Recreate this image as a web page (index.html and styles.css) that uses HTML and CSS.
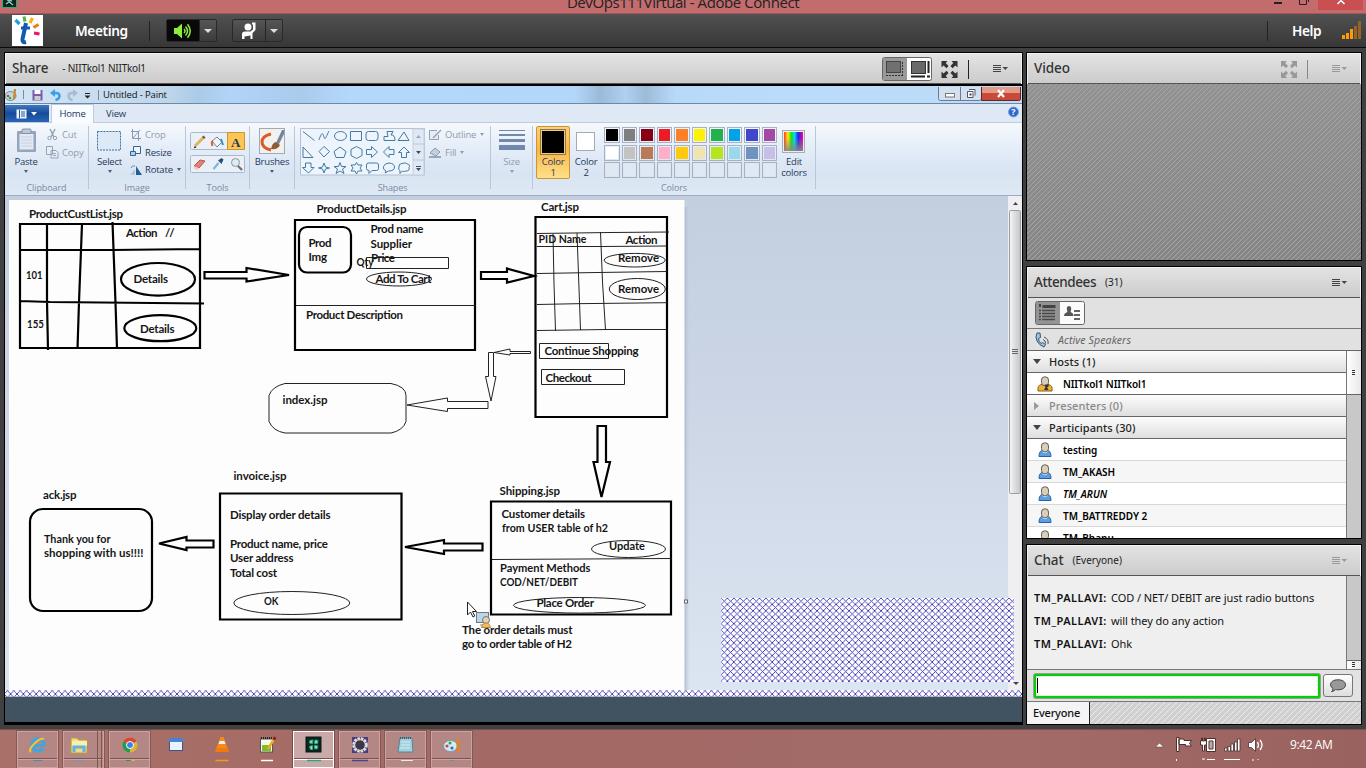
FILE: index.html
```html
<!DOCTYPE html>
<html lang="en">
<head>
<meta charset="utf-8">
<title>DevOps111Virtual - Adobe Connect</title>
<link rel="stylesheet" href="styles.css">
</head>
<body>
<svg class="defs" width="0" height="0">
  <defs>
    <symbol id="menu" viewBox="0 0 15 8"><path d="M0 .5h8M0 2.500h8M0 4.500h8M0 6.500h8" stroke="currentColor"/><path d="M9.500 2h5.500l-2.700 3z" fill="currentColor"/></symbol>
    <symbol id="expand" viewBox="0 0 16 17"><g fill="currentColor"><path d="M0 0h6L4.200 2 7 5 5 7.200 2 4.500 0 6.500z"/><path d="M16 0h-6l1.800 2L9 5l2 2.200 3-2.700 2 2z"/><path d="M0 17h6l-1.800-2L7 12l-2-2.200-3 2.700-2-2z"/><path d="M16 17h-6l1.800-2L9 12l2-2.200 3 2.700 2-2z"/></g></symbol>
    <symbol id="person" viewBox="0 0 14 16"><path d="M1 14.500c0-4 1.500-6 3.500-6h5c2 0 3.500 2 3.500 6z" fill="#5b9fe3" stroke="#2a5fa5"/><path d="M4 9c1.500 3 4.500 3 6 0" fill="#cfe4f8"/><rect x="3.500" y=".8" width="7" height="9" rx="3.300" fill="#d9cfb8" stroke="#625d55"/></symbol>
    <symbol id="host" viewBox="0 0 16 16"><path d="M1 15v-3c0-2 2-3.500 4-3.500h6c2 0 4 1.500 4 3.500v3z" fill="#f0b03a" stroke="#8a5b10"/><rect x="4.500" y=".8" width="7" height="9" rx="3.300" fill="#d9cfb8" stroke="#625d55"/><path d="M7.500 8.500h4v2.500H10l1.500 3H7l1.500-3z" fill="#333"/></symbol>
    <pattern id="hatch" width="6.400" height="6.400" patternUnits="userSpaceOnUse" x="721" y="598"><rect width="6.400" height="6.400" fill="#fff"/><path d="M-1-1l8.400 8.400M-1 7.400l8.400-8.400" stroke="#2f28ae" stroke-width=".85"/></pattern>
    <linearGradient id="desk" x1="0" y1="0" x2="0" y2="1"><stop offset="0" stop-color="#c3cfdf"/><stop offset=".35" stop-color="#cad4e4"/><stop offset="1" stop-color="#dce6f2"/></linearGradient>
    <linearGradient id="shade"><stop offset="0" stop-color="#a9b7ca"/><stop offset="1" stop-color="#c7d2e2" stop-opacity="0"/></linearGradient>
    <linearGradient id="thumb"><stop offset="0" stop-color="#f6f6f6"/><stop offset="1" stop-color="#c2c4c8"/></linearGradient>
    <linearGradient id="rain"><stop offset="0" stop-color="#f33"/><stop offset=".2" stop-color="#fe0"/><stop offset=".4" stop-color="#1d2"/><stop offset=".55" stop-color="#0de"/><stop offset=".75" stop-color="#22e"/><stop offset="1" stop-color="#f09"/></linearGradient>
    <linearGradient id="fade" x1="0" y1="0" x2="0" y2="1"><stop offset=".3" stop-color="#888" stop-opacity="0"/><stop offset="1" stop-color="#888" stop-opacity=".9"/></linearGradient>
  </defs>
</svg>

<header class="titlebar">
  <svg class="app-icon" width="15" height="8"><path d="M.5 0v7.500h14V0" fill="#10251f" stroke="#27ad83"/><path d="M4 4l3-2 4 3M5 0l5 1" stroke="#7fd0b4" stroke-width="1.500"/></svg>
  <div class="window-title">DevOps111Virtual - Adobe Connect</div>
  <div class="win-controls"><svg width="112" height="13"><path d="M20 3h8" stroke="#222" stroke-width="2"/><path d="M45.500 0v4.500h7V0M54.500 0v2" fill="none" stroke="#222"/><rect x="64" width="45" height="10" fill="#c94f50"/><path d="M83.500 4L87 .5 90.500 4" fill="none" stroke="#fff" stroke-width="1.500"/></svg></div>
</header>

<nav class="menubar">
  <svg class="logo" width="31" height="31" viewBox="0 0 31 31"><rect width="31" height="31" fill="#fff"/><path d="M14 8l-3.500 16q-.6 4 3.500 3" fill="none" stroke="#0d5cad" stroke-width="4"/><path d="M9 13h9" stroke="#0d5cad" stroke-width="3"/><g stroke-width="3.200"><path d="M3.500 5l4 4" stroke="#1ba1dc"/><path d="M12 1.500l1 5" stroke="#5cb442"/><path d="M20.500 3l-2.500 5" stroke="#f3b60b"/><path d="M26.500 9.500l-5 3" stroke="#ef7a1a"/><path d="M22 18l5.500 1" stroke="#e3176d"/></g></svg>
  <span class="menu-label">Meeting</span>
  <i class="menu-sep"></i>
  <div class="tool-btn"><span class="tool-main dark"><svg width="20" height="16" viewBox="0 0 20 16"><path d="M1 5h3l5-4.500v15L4 11H1z" fill="#8eee3a"/><path d="M11 6q2 2 0 4M12.500 3.500q4 4.500 0 9M14.500 1.200q5.500 6.800 0 13.600" fill="none" stroke="#8eee3a" stroke-width="1.500"/></svg></span><span class="tool-drop"></span></div>
  <div class="tool-btn"><span class="tool-main"><svg width="16" height="17" viewBox="0 0 16 17"><circle cx="7" cy="5" r="3.500" fill="#fff"/><path d="M1 17v-5q0-2.500 3-2.500h5.500l2.500-2V2.500h-1V.500h3.500V8L11.500 11v6h-2v-3.500l-6 1V17z" fill="#fff"/></svg></span><span class="tool-drop"></span></div>
  <i class="grow"></i>
  <i class="menu-sep"></i>
  <span class="menu-label help">Help</span>
  <svg class="signal" width="19" height="19"><path d="M0 14h3v4H0zM4 12h3v6H4zM8 8h3v10H8z" fill="#ff9b05"/><path d="M12 5h3v13h-3zM16 0h3v18h-3z" fill="#936425"/></svg>
</nav>

<main class="workspace">
  <section class="pod share">
    <div class="pod-head">
      <h2>Share</h2><span class="sub sharer">- NIITkol1 NIITkol1</span>
      <i class="grow"></i>
      <svg class="view-toggle" width="50" height="24"><rect x=".5" y=".5" width="49" height="23" rx="2" fill="#fdfdfd" stroke="#666"/><path d="M1 1h24v22H1z" fill="#999"/><rect x="4.500" y="4.500" width="14" height="11" fill="#707070" stroke="#444"/><path d="M4 18.500h17M20.500 5v14" fill="none" stroke="#333" stroke-dasharray="2 1"/><rect x="29.500" y="4.500" width="14" height="12" fill="#696969" stroke="#333"/><path d="M29 19.500h14M46.500 4v12M45 19.500h3" stroke="#222" stroke-width="2"/></svg>
      <svg class="expand-ico" width="17" height="17"><use href="#expand"/></svg>
      <i class="head-sep"></i>
      <svg class="menu-ico" width="15" height="8"><use href="#menu"/></svg>
    </div>
    <div class="screen">
      <div class="paint-title">
        <svg width="92" height="16" viewBox="5 87 92 16"><ellipse cx="10.500" cy="96" rx="5.500" ry="4.500" fill="#b7dbe0" stroke="#698f9c"/><circle cx="8" cy="96" r="1.300" fill="#e33"/><circle cx="10" cy="98" r="1.200" fill="#3a3"/><path d="M15 89l-1 10" stroke="#d98224" stroke-width="2.200"/><path d="M23.500 90v9" stroke="#888"/><rect x="32.500" y="90" width="10" height="10.500" fill="#7b5ab0"/><rect x="34.500" y="90" width="6" height="4" fill="#fff"/><rect x="34.500" y="96" width="6" height="4" fill="#ccc"/><path d="M52 93h4q3.500 0 3.500 3t-4 4" fill="none" stroke="#3ba1e2" stroke-width="2.500"/><path d="M50 93l5-4v8z" fill="#3ba1e2"/><path d="M76 93h-4q-3.500 0-3.500 3t4 4" fill="none" stroke="#a9bccd" stroke-width="2.500"/><path d="M78 93l-5-4v8z" fill="#a9bccd"/><path d="M85 93.500h5" stroke="#222"/><path d="M84.500 95.500h6l-3 3z" fill="#222"/></svg>
        <i class="tsep"></i><span>Untitled - Paint</span><i class="grow"></i>
        <svg width="84" height="16"><rect x=".5" y="-2" width="43" height="15.500" rx="2" fill="#d3e0ef" stroke="#6b7c92"/><path d="M22.500 0v13" stroke="#6b7c92"/><path d="M43.500-2h39V12q0 1.500-2 1.500h-37z" fill="#c94a38" stroke="#64262a"/><path d="M44 0h38v6H44z" fill="#e39a88"/><rect x="7.500" y="6.500" width="9" height="3.500" fill="#fff" stroke="#777"/><path d="M31 2.500h6v6M29.500 4.500h5.500v6h-5.500z" fill="#fff" stroke="#556"/><rect x="31.500" y="6.500" width="2" height="2" fill="#445"/><path d="M60 3l6 7M66 3l-6 7" stroke="#fff" stroke-width="2.200"/></svg>
      </div>
      <div class="paint-tabs">
        <span class="file-tab"><svg width="22" height="10"><rect x=".5" y=".5" width="10" height="9" fill="#edf4fc"/><path d="M3.500 1v8M5 3h4M5 5h4M5 7h4" stroke="#24569b"/><path d="M15 3h6l-3 3.500z" fill="#fff"/></svg></span>
        <span class="tab active">Home</span><span class="tab">View</span><i class="grow"></i>
        <svg width="11" height="12"><circle cx="5.500" cy="6" r="5" fill="#2d66c8" stroke="#7ea4dd"/><text x="3.300" y="9.200" class="q">?</text></svg>
      </div>
      <div class="ribbon">
        <div class="group g-clip"><div class="gbody">
          <div class="big"><svg width="21" height="25"><rect x="1" y="3" width="19" height="21" rx="1" fill="#95a5bd"/><rect x="3.500" y="6" width="14" height="15.500" fill="#e2e9f3"/><rect x="6" y="1" width="9" height="4.500" rx="1" fill="#bdc8d8" stroke="#8292aa"/><path d="M5 9h11M5 12h11M5 15h11M5 18h11" stroke="#c6d1e0"/></svg><span>Paste</span><b class="dd"></b></div>
          <div class="stack dim"><div><svg width="13" height="13"><path d="M4 1l4 8M9 1L5 9" stroke="#96a4b8" stroke-width="1.500"/><circle cx="3.500" cy="10" r="1.700" fill="none" stroke="#96a4b8"/><circle cx="9" cy="10" r="1.700" fill="none" stroke="#96a4b8"/></svg>Cut</div><div><svg width="13" height="13"><path d="M.5.500h6v8h-6zM5 4.500h5l2 2V12H5z" fill="#e9eff7" stroke="#94a3b8"/><path d="M7 7.500h3M7 9.500h3" stroke="#94a3b8"/></svg>Copy</div></div>
        </div><label>Clipboard</label></div>
        <div class="group g-img"><div class="gbody">
          <div class="big"><svg width="25" height="25"><rect x=".5" y="3.500" width="23" height="18.500" fill="#dde9f7" stroke="#396fa0" stroke-dasharray="2 1"/></svg><span>Select</span><b class="dd"></b></div>
          <div class="stack"><div class="dim"><svg width="12" height="12"><path d="M2.500 0v9.500H11M1 2.500h7.500V12M3 9l7-8" fill="none" stroke="#8a9bb4"/></svg>Crop</div><div><svg width="12" height="12"><path d="M3.500.500h7v7h-7z" fill="#eef6ff" stroke="#38648e"/><path d="M.5 5.500h5v4h-5z" fill="#a9d3f2" stroke="#38648e"/></svg>Resize</div><div><svg width="12" height="12"><path d="M6 2v9h6z" fill="#215f94"/><path d="M5 5v6H0z" fill="#b2c6dc"/><path d="M1 4q1-3 4-2" fill="none" stroke="#4a92c8"/></svg>Rotate<b class="dd inline"></b></div></div>
        </div><label>Image</label></div>
        <div class="group g-tools"><div class="gbody">
          <svg width="56" height="42" viewBox="190 132 56 42"><rect x="190.500" y="132.500" width="54" height="17" rx="1" fill="#e9f0f8" stroke="#aab8cb"/><rect x="190.500" y="155.500" width="54" height="17" rx="1" fill="#e9f0f8" stroke="#aab8cb"/><path d="M227.500 132.500h17v17h-17z" fill="#fbc653" stroke="#c9952f"/><text x="231" y="146.500" class="tool-a">A</text><path d="M195 146l8-8" stroke="#e0b25e" stroke-width="3"/><path d="M194 147.500l2-.5" stroke="#333" stroke-width="1.500"/><path d="M203 138l1.500-1.500" stroke="#8b4a34" stroke-width="3"/><path d="M212 141l5-4 5 5-5 5z" fill="#eef4fa" stroke="#71879f"/><path d="M213 141q-2 1-.5 5" fill="none" stroke="#e05a2a" stroke-width="2"/><path d="M221 139l2 6" stroke="#3d8bd0" stroke-width="2"/><path d="M194 166l6-6 5 1-6 7z" fill="#e6817a" stroke="#b85650"/><path d="M194 166l5 2-1 2-4-1z" fill="#f5c9c2"/><path d="M213.500 169l5-6" stroke="#85b4da" stroke-width="2.200"/><path d="M218 160.500l3.500 3.500 2-4.500-2-1.500z" fill="#26517c"/><circle cx="235.500" cy="162.500" r="4" fill="#dcebf8" stroke="#8a94a3"/><path d="M238 166l4 4" stroke="#76695d" stroke-width="2.200"/></svg>
        </div><label>Tools</label></div>
        <div class="group g-brush"><div class="gbody"><div class="big"><svg width="26" height="26"><rect x=".5" y=".5" width="25" height="25" fill="#f2f1ee" stroke="#9fa9b8"/><path d="M12 6q-9 2-9 8t9 8" fill="none" stroke="#dc5a2a" stroke-width="3"/><path d="M17 15l6-13 2 0v4l-5 10z" fill="#72849b"/><path d="M12 21q1-6 5-7l4 3q-2 5-9 4z" fill="#8f5d34"/></svg><span>Brushes</span><b class="dd"></b></div></div><label></label></div>
        <div class="group g-shapes"><div class="gbody">
          <svg width="125" height="48" viewBox="300 128 125 48"><rect x="300.500" y="128.500" width="124" height="46.500" fill="#eef4fb" stroke="#b3c0d2"/><path d="M413 129h11v46h-11z" fill="#dfe8f4" stroke="#c5d0df"/><path d="M413 144h11M413 160h11" stroke="#bac8d9"/><path d="M416 138h5l-2.500-3z" fill="#9aa8bb"/><path d="M416 151h5l-2.500 3zM416 168h5l-2.500 3zM416 166h5v1h-5z" fill="#3f4e63"/>
          <g fill="none" stroke="#437ba6"><path d="M303 131.500l11.500 9M319 140c3-9 4-7 5-3s2 0 5-6"/><ellipse cx="340.500" cy="136" rx="6" ry="4.500"/><path d="M350.500 131.500h11v9h-11z"/><rect x="366" y="131.500" width="12" height="9" rx="2.500"/><path d="M387 131.500h6l-2 3.500q4-.5 4 5.500h-11v-4h4zM404 132l5 8.500h-11zM303 147l10 10.500h-10zM324 146.500l5.500 5-5.500 5.500-5-5.500zM340 147l6 4.500-2 6h-8l-2-6zM356.500 146.500l5.500 3v6l-5.500 3-5.500-3v-6zM366.500 149.500h5v-3l6 5.500-6 5.500v-3h-5zM394 149.500h-5v-3l-5.500 5.500 5.500 5.500v-3h5zM404 147l5.500 5.500h-3v5h-5v-5h-3zM305.500 163v4.500h-3l6 5.500 5.500-5.500h-3V163zM324 163l1.500 4 4 1-4 1-1.500 4-1.500-4-4-1 4-1zM340 162.500l1.500 4h4.500l-3.500 2.500 1.500 4.500-4-2.500-4 2.500 1.500-4.500-3.500-2.500h4.500zM356.500 162.500l1.500 2.500h4l-2 3 2 3h-4l-1.500 3-1.500-3h-4l2-3-2-3h4z"/><path d="M368.500 163h8q2 0 2 2v3.500q0 2-2 2H372l-3 3v-3q-2.500 0-2.500-2V165q0-2 2-2zM386 171q-3.500-1.500-2.500-4.500 1.500-3.500 5.500-3.500 5.500.5 5.500 4 0 4-6 4l-3.500 2zM400 170.500q-2.500-1-1-3.500-.5-3.500 3-3.500 3.500-1.500 5.500.5 3 .5 1.500 3.500 1 3.500-3 3.500-1.500 1-3.500 0l-2.500 2.500z"/></g></svg>
          <div class="stack dim"><div><svg width="13" height="12"><path d="M8 1.500H.500v9h9V6" fill="#e7edf5" stroke="#93a1b6"/><path d="M4 9l8-8" stroke="#93a1b6" stroke-width="1.500"/></svg>Outline<b class="dd inline"></b></div><div><svg width="13" height="12"><path d="M1 7l5-5 5 4-4 4z" fill="#c4cfde" stroke="#8b9ab1"/><path d="M0 10h12v2H0z" fill="#98a7bc"/></svg>Fill<b class="dd inline"></b></div></div>
        </div><label>Shapes</label></div>
        <div class="group g-size"><div class="gbody"><div class="big dim"><svg width="26" height="25"><path d="M0 2.500h26" stroke="#7289ab"/><path d="M0 7h26" stroke="#7289ab" stroke-width="2"/><path d="M0 12.500h26" stroke="#7289ab" stroke-width="3"/><path d="M0 19.500h26" stroke="#7289ab" stroke-width="5"/></svg><span>Size</span><b class="dd"></b></div></div><label></label></div>
        <div class="group g-colors"><div class="gbody">
          <div class="big color1"><svg width="26" height="26"><rect x=".5" y=".5" width="25" height="25" fill="#fbc866" stroke="#8c7a51"/><rect x="2" y="2" width="22" height="22" fill="#000"/></svg><span>Color<br>1</span></div>
          <div class="big color2"><svg width="20" height="26"><rect x=".5" y="3.500" width="18" height="18" fill="#fff" stroke="#a4aab4"/></svg><span>Color<br>2</span></div>
          <div class="swatches">
            <i class="c-black"></i><i class="c-gray"></i><i class="c-maroon"></i><i class="c-red"></i><i class="c-orange"></i><i class="c-yellow"></i><i class="c-green"></i><i class="c-sky"></i><i class="c-indigo"></i><i class="c-purple"></i>
            <i class="c-white"></i><i class="c-silver"></i><i class="c-brown"></i><i class="c-pink"></i><i class="c-gold"></i><i class="c-cream"></i><i class="c-lime"></i><i class="c-aqua"></i><i class="c-steel"></i><i class="c-lilac"></i>
            <i></i><i></i><i></i><i></i><i></i><i></i><i></i><i></i><i></i><i></i>
          </div>
          <div class="big edit"><svg width="24" height="26"><rect x=".5" y="1.500" width="22" height="22" fill="#eee" stroke="#a5adb9"/><rect x="2" y="3" width="19" height="19" fill="url(#rain)"/><rect x="2" y="3" width="19" height="19" fill="url(#fade)"/></svg><span>Edit<br>colors</span></div>
        </div><label>Colors</label></div>
      </div>
      <svg class="drawing" width="1017" height="502" viewBox="5 195 1017 502">
        <rect x="5" y="195" width="1017" height="502" fill="url(#desk)"/>
        <path d="M5 195.500h1017" stroke="#9aabc5"/>
        <rect x="684" y="207" width="6" height="483" fill="url(#shade)"/>
        <rect x="9" y="200" width="675.500" height="490" fill="#fdfdfe"/>
        <rect x="684.500" y="600" width="3" height="3" fill="#fff" stroke="#667"/>
        <g class="thick">
          <path d="M20 224h180v124H20zM47 223v78l1 49M82 224l-3 78-1.500 47M112.500 222l3 81 1.500 46M20 250h92l88-1M20 301l30 1 154 1.500"/>
          <ellipse cx="158" cy="279.300" rx="37" ry="16.300"/><ellipse cx="160.300" cy="328.200" rx="36" ry="13"/>
          <path d="M204.500 272h42v-4l42.500 7-42.500 6.500v-3h-42z"/>
          <path d="M295 220h180v130H295z"/><rect x="299" y="227" width="52" height="45.500" rx="8"/>
          <path d="M481 272h26v-3.500l27 7.500-27 6.500V279h-26z"/><path d="M535.500 217H667v200H535.500z"/>
          <path d="M597.500 426h8.500v36h4l-8.500 35-8-35h4z"/><path d="M491 501.500h180v113H491z"/>
          <path d="M482.500 543.500H444V540l-39 7 39 7v-3.500h38.500z"/><path d="M220 493.500h181.500v126H220z"/>
          <rect x="30" y="509" width="122" height="102" rx="13"/><path d="M213.500 540.500h-27V537L159 543.500l27.500 6.500v-2.500h27z"/>
        </g>
        <g class="thin">
          <path d="M296 305.500h179M366.500 257.500h82v11h-82z"/><ellipse cx="399" cy="279" rx="32.500" ry="7"/>
          <path d="M537 233.500l73-1 59-.5M537 246.500h64l65-.5M537 273.500l60-1 70-1M537 304.500l40-.8 90-1M537 330.500l70-1h59M553 234l1 50 1.500 47M577 233l3.500 97M600.500 232l2 50 3 48"/>
          <ellipse cx="634.700" cy="260.200" rx="30.500" ry="6.800"/><ellipse cx="637.300" cy="289" rx="28" ry="10.500"/>
          <path d="M539.500 343.500h69v15h-69zM541.500 369.500h83v15h-83z"/>
          <path d="M530.500 351.500H510V349l-16 3.500 16 2.500v-1.500h20.500zM488.500 352.500h5v24h2.500L491 401l-5.500-24.500h3zM488 401.500h-40.500V398L407 405l40.500 6.500v-3H488z"/>
          <path d="M285 383.500h106q15 3 15 12v26q-3 9-15 11.500H285q-12-2-16-11.500v-26q3-9 16-12z"/>
          <path d="M492 559.500l90-.5 88-.5"/><ellipse cx="628.500" cy="549" rx="37" ry="8.500"/><ellipse cx="579.500" cy="605.300" rx="66" ry="7.800"/><ellipse cx="291.800" cy="603" rx="58" ry="11.500"/>
        </g>
        <g class="note">
          <text x="29" y="218" textLength="94">ProductCustList.jsp</text><text x="316.500" y="213" textLength="90">ProductDetails.jsp</text><text x="541" y="211" textLength="38">Cart.jsp</text>
          <text x="126" y="237" textLength="31.500">Action</text><text x="165" y="237" textLength="9.500">//</text><text x="26" y="279" textLength="16.500" lengthAdjust="spacingAndGlyphs">101</text><text x="27" y="328" textLength="17" lengthAdjust="spacingAndGlyphs">155</text><text x="133.500" y="283" textLength="34.500">Details</text><text x="140" y="333" textLength="34.500">Details</text>
          <text x="308.500" y="247" textLength="23">Prod</text><text x="308.500" y="261" textLength="18.500">Img</text><text x="370.500" y="233" textLength="53">Prod name</text><text x="370.500" y="248" textLength="41.500">Supplier</text><text x="371" y="262" textLength="24">Price</text><text x="356.500" y="266" textLength="17" lengthAdjust="spacingAndGlyphs">Qty</text><text x="375.500" y="283" textLength="56">Add To Cart</text><text x="306" y="319" textLength="97">Product Description</text>
          <text x="538.500" y="243" textLength="48" lengthAdjust="spacingAndGlyphs">PID Name</text><text x="625.500" y="244" textLength="32">Action</text><text x="618" y="261.500" textLength="41" lengthAdjust="spacingAndGlyphs">Remove</text><text x="618" y="293" textLength="41" lengthAdjust="spacingAndGlyphs">Remove</text><text x="544.500" y="355" textLength="94">Continue Shopping</text><text x="545.500" y="382" textLength="46">Checkout</text><text x="282.500" y="404" textLength="45">index.jsp</text>
          <text x="233.500" y="480" textLength="53">invoice.jsp</text><text x="43" y="499" textLength="33.500">ack.jsp</text><text x="44" y="543" textLength="66.500" lengthAdjust="spacingAndGlyphs">Thank you for</text><text x="44" y="557" textLength="99.500" lengthAdjust="spacingAndGlyphs">shopping with us!!!!</text>
          <text x="230" y="519" textLength="100.500">Display order details</text><text x="230" y="548" textLength="98">Product name, price</text><text x="230" y="562" textLength="63.500">User address</text><text x="230" y="577" textLength="47">Total cost</text><text x="264" y="605" textLength="14.500" lengthAdjust="spacingAndGlyphs">OK</text>
          <text x="499.500" y="495" textLength="60.500">Shipping.jsp</text><text x="501.500" y="518" textLength="83.500">Customer details</text><text x="502" y="532" textLength="106" lengthAdjust="spacingAndGlyphs">from USER table of h2</text><text x="609" y="550" textLength="36" lengthAdjust="spacingAndGlyphs">Update</text><text x="500" y="572" textLength="90.500" lengthAdjust="spacingAndGlyphs">Payment Methods</text><text x="500" y="586" textLength="78" lengthAdjust="spacingAndGlyphs">COD/NET/DEBIT</text><text x="536.500" y="607" textLength="57.500">Place Order</text>
          <text x="462" y="634" textLength="110.500">The order details must</text><text x="462" y="648" textLength="110">go to order table of H2</text>
        </g>
        <path d="M467.500 602v13l3-3 2.500 5 1.800-1-2.300-4.500h4z" fill="#fff" stroke="#222"/>
        <rect x="476.500" y="612.500" width="12" height="10" fill="#b9d7ec" stroke="#777"/><path d="M480 625h4" stroke="#888"/><circle cx="486" cy="620" r="3.500" fill="#ddd3bd" stroke="#7a7468"/><path d="M481.500 627.500q1-4.500 4.500-4.500t4.500 4.500z" fill="#efbd68" stroke="#b98632"/>
        <rect x="1008" y="196" width="14" height="494" fill="#efeff1"/><path d="M1013 205h5l-2.500-3z" fill="#444"/>
        <rect x="1009.500" y="210.500" width="11" height="283" rx="1" fill="url(#thumb)" stroke="#9a9da3"/><path d="M1012 349.500h6M1012 351.500h6M1012 353.500h6" stroke="#666"/>
        <path d="M1013 682h6l-3 3z" fill="#444"/><rect x="721.500" y="598" width="292.500" height="84" fill="url(#hatch)"/>
        <rect x="5" y="690" width="1017" height="7" fill="url(#hatch)"/><path d="M5 696.500h1017" stroke="#9098a8" opacity=".6"/>
      </svg>
    </div>
  </section>

  <aside class="pods">
    <section class="pod video">
      <div class="pod-head"><h2>Video</h2><i class="grow"></i><svg class="expand-ico off" width="16" height="17"><use href="#expand"/></svg><i class="head-sep light"></i><svg class="menu-ico off" width="15" height="8"><use href="#menu"/></svg></div>
      <div class="video-body"></div>
    </section>
    <section class="pod attendees">
      <div class="pod-head"><h2 class="wide">Attendees</h2><span class="sub">(31)</span><i class="grow"></i><svg class="menu-ico" width="15" height="8"><use href="#menu"/></svg></div>
      <div class="att-tools"><svg width="50" height="24"><rect x=".5" y=".5" width="49" height="23" rx="2" fill="#fbfbfb" stroke="#666"/><path d="M1 1h24v22H1z" fill="#939393"/><path d="M4 4.500h2M7.500 5.500h13" stroke="#444" stroke-width="3"/><path d="M4 9.500h16M4 12.500h16M4 15.500h16M4 18.500h16" stroke="#494949" stroke-width="1.500"/><path d="M6.500 8v12" stroke="#999"/><path d="M29 15q0-3 3.500-4-2-6 1.500-6t1.500 6q3 1 3 4z" fill="#555"/><path d="M39 10h6M39 14h6M39 18h6" stroke="#333" stroke-width="1.700"/></svg></div>
      <div class="speakers"><svg width="15" height="16" viewBox="0 0 15 16"><path d="M2 1q-2 4 0 8t7 6l1.500-2.500-3-2-1.500 1q-2.500-2-2.500-5l2-1L5 1z" fill="#9bc8e8" stroke="#34536d"/><path d="M8 7.500q3 1 2.500 4M9 5q5 2 4 7" fill="none" stroke="#555"/></svg>Active Speakers</div>
      <div class="att-scroll">
        <div class="att-list">
          <div class="role"><b class="tri"></b>Hosts (1)</div>
          <div class="person host"><svg width="16" height="16"><use href="#host"/></svg>NIITkol1 NIITkol1</div>
          <div class="role empty"><b class="tri right"></b>Presenters (0)</div>
          <div class="role"><b class="tri"></b>Participants (30)</div>
          <div class="person"><svg width="14" height="16"><use href="#person"/></svg>testing</div>
          <div class="person alt"><svg width="14" height="16"><use href="#person"/></svg>TM_AKASH</div>
          <div class="person"><svg width="14" height="16"><use href="#person"/></svg><em>TM_ARUN</em></div>
          <div class="person alt"><svg width="14" height="16"><use href="#person"/></svg>TM_BATTREDDY 2</div>
          <div class="person"><svg width="14" height="16"><use href="#person"/></svg>TM_Bhanu</div>
        </div>
        <div class="track"><div class="knob"><svg width="4" height="6"><path d="M0 .5h3M0 2.500h3M0 4.500h3" stroke="#333"/></svg></div></div>
      </div>
    </section>
    <section class="pod chat">
      <div class="pod-head"><h2>Chat</h2><span class="sub everyone">(Everyone)</span><i class="grow"></i><svg class="menu-ico off" width="15" height="8"><use href="#menu"/></svg></div>
      <div class="chat-body">
        <div class="messages"><p><b>TM_PALLAVI:</b> <span>COD / NET/ DEBIT are just radio buttons</span></p><p><b>TM_PALLAVI:</b> <span>will they do any action</span></p><p><b>TM_PALLAVI:</b> <span>Ohk</span></p></div>
        <div class="track end"><div class="knob small"><svg width="4" height="6"><path d="M0 .5h3M0 2.500h3M0 4.500h3" stroke="#333"/></svg></div></div>
      </div>
      <div class="chat-input"><div class="field"><i class="caret"></i></div><div class="send"><svg width="18" height="14" viewBox="0 0 18 14"><path d="M9 .8c4.500 0 7.500 2 7.500 5s-3 5-7.500 5q-1.500 0-2.500-.3-1.500 2-4 2 1.500-1 1.500-3Q1.500 8 1.500 5.800c0-3 3-5 7.500-5z" fill="#999" stroke="#444"/></svg></div></div>
      <div class="chat-tabs"><span>Everyone</span></div>
    </section>
  </aside>
</main>

<footer class="taskbar">
  <div class="apps">
    <div class="task open"><svg width="43" height="38"><circle cx="22" cy="15" r="6" fill="none" stroke="#3ba6e2" stroke-width="3.500"/><path d="M17 15.500h10" stroke="#3ba6e2" stroke-width="2.500"/><path d="M25.500 17.500h5" stroke="#b68783" stroke-width="2"/><path d="M15 22q-3-2 3-8t10-5" fill="none" stroke="#f4c32c" stroke-width="2"/><path d="M17 30.500h9" stroke="#3d8fb8"/></svg></div>
    <div class="task open"><svg width="43" height="38"><path d="M9 8h6l2 2h8v13H9z" fill="#f0d987" stroke="#b69a42"/><path d="M10 11h15v5H10z" fill="#fbeeb2"/><path d="M12 22v-5h10v5" fill="none" stroke="#62b4dd" stroke-width="3"/><path d="M35.500 0v38M39.500 0v38" stroke="#805450"/><path d="M12 30.500h10" stroke="#5aa0c0"/></svg></div>
    <div class="task open"><svg width="43" height="38"><circle cx="22" cy="15" r="7.500" fill="#ddb62f"/><path d="M22 15l-6.500-3.800A7.500 7.500 0 0 1 28.500 11.200z" fill="#dc4437"/><path d="M22 15l-6.500-3.800A7.500 7.500 0 0 0 22 22.500z" fill="#259b50"/><circle cx="22" cy="15" r="3.500" fill="#3f80e5" stroke="#fff"/><path d="M18 30.500h5" stroke="#259b50"/><path d="M23 30.500h4" stroke="#ddb62f"/></svg></div>
    <div class="task"><svg width="43" height="38"><rect x="15.500" y="8.500" width="13" height="12" fill="#eaf2fb" stroke="#34568c"/><path d="M15 8h14v4H15z" fill="#4b82d4"/></svg></div>
    <div class="task"><svg width="43" height="38"><path d="M20.500 7h3l4 11h-11z" fill="#f58a17"/><path d="M19.500 11h5l1 3h-7z" fill="#eee"/><path d="M16 18h12l1 4H15z" fill="#ee7a10"/><path d="M15.500 30.500h13" stroke="#f39b12" stroke-width="1.500"/></svg></div>
    <div class="task"><svg width="43" height="38"><rect x="14.500" y="9" width="12" height="13" fill="#f5f8ed" stroke="#555"/><path d="M16 15h9v6h-9z" fill="#81bd22"/><path d="M15 8h11" stroke="#222" stroke-width="2" stroke-dasharray="1 1"/><path d="M22 19l6-10" stroke="#edae21" stroke-width="2.500"/><path d="M28 10l1-3" stroke="#8b1721" stroke-width="2.500"/><path d="M15 30.500h12" stroke="#fff" stroke-width="1.500"/></svg></div>
    <div class="task open current"><svg width="43" height="38"><rect x="14.500" y="7.500" width="14" height="14" fill="#0f2c22" stroke="#0b1d18" stroke-width="2"/><path d="M20.500 13.500l-3-.5.5-2.500 3-.5zM22.500 13.500l.5-3.500 3 .5-.5 3zM20.500 15.500l-3 1 1 3h2zM22.500 15.500l3.500.5-1 3-2.500-.5z" fill="#9be0c5" stroke="#29a77e"/><path d="M15 30.500h14" stroke="#25a979" stroke-width="1.500"/></svg></div>
    <div class="task open"><svg width="43" height="38"><rect x="14" y="7" width="16" height="16" fill="#4c3c82"/><circle cx="22" cy="15" r="6.300" fill="#39364d" stroke="#e6e1d4" stroke-width="3" stroke-dasharray="2.500 .8"/><circle cx="22" cy="15" r="5.500" fill="none" stroke="#d8d4cb"/><path d="M14 30.500h16" stroke="#51418a" stroke-width="1.500"/></svg></div>
    <div class="task open"><svg width="43" height="38"><path d="M16 8h12l1 14H14z" fill="#a2d1de" stroke="#4e8898"/><path d="M16 8h12" stroke="#425d66" stroke-width="2" stroke-dasharray="1 1"/><path d="M17 12h9M17 15h9M16 18h10" stroke="#d3edf2"/><path d="M17 30.500h12" stroke="#e9e9dd"/></svg></div>
    <div class="task open"><svg width="43" height="38"><ellipse cx="20.500" cy="16" rx="7" ry="5.500" fill="#d4e9f0" stroke="#769cae"/><circle cx="17" cy="16" r="1.600" fill="#db4436"/><circle cx="20" cy="13" r="1.500" fill="#32a448"/><circle cx="22" cy="18" r="1.600" fill="#2a70cf"/><path d="M28 8v14" stroke="#e28029" stroke-width="3"/><path d="M26 9h4" stroke="#bd8b68" stroke-width="3"/><path d="M20 30.500h4" stroke="#5594b0"/></svg></div>
  </div>
  <div class="tray"><svg width="112" height="34" viewBox="1154 734 112 34"><path d="M1155.500 747h8l-4-4z" fill="#fff" stroke="#6a4543" stroke-width=".6"/><g fill="#fff" stroke="#4b302f"><path d="M1176.500 737.500h2.500v14h-2.500zM1179 739h5v1.500h7.500l-2 3 2 2.500h-6v-1.500H1179zM1206.500 738.500h9v13h-9z"/><path d="M1201.500 741v-3h1v3h2v-3h1v3h1v4h-2v6h-2v-6h-2v-4z"/></g><path d="M1209 741h4v8h-4z" fill="#c7aaa8" stroke="#4b302f"/><g fill="#fff" stroke="#4b302f" stroke-width=".8"><path d="M1224.500 748h2.500v3h-2.500zM1228 746.500h2.500v4.500h-2.500zM1231 744h2.500v7h-2.500zM1234.500 742h2.500v9h-2.500zM1237.500 739h2.500v12h-2.500z"/><path d="M1248.500 742.500h3l4-4v13l-4-4h-3z"/></g><path d="M1257.500 742q2 3 0 6M1260 740q4 5 0 10" fill="none" stroke="#fff" stroke-width="1.300"/><path d="M1176.500 759v2M1202 759h3M1207 759.500h8M1224 759.500h16M1253 759v2M1258 759v1" stroke="#fff"/></svg><time>9:42 AM</time></div>
</footer>
</body>
</html>
```

FILE: styles.css
```css
* { box-sizing: border-box; }
body { margin: 0; width: 1366px; height: 768px; overflow: hidden; display: flex; flex-direction: column; background: #404040; font-family: "Noto Sans", sans-serif; color: #222; }
svg { display: block; flex: none; }
.defs { position: absolute; }
.grow { flex: 1; }

.titlebar { height: 14px; flex: none; display: flex; justify-content: space-between; align-items: flex-start; background: #c26c6d; border-bottom: 1px solid #a65558; overflow: hidden; }
.app-icon { margin-left: 2px; }
.window-title { font: 15px/18px "Open Sans", sans-serif; letter-spacing: -.42px; margin: -7px 0 0 95px; white-space: nowrap; }
.win-controls { width: 112px; }

.menubar { height: 34px; flex: none; display: flex; align-items: center; padding: 0 5px 0 12px; background: linear-gradient(#515151, #373737); border-bottom: 1px solid #0a0a0a; color: #fff; }
.menu-label { font-size: 13.700px; font-weight: 600; line-height: 20px; margin-left: 32px; width: 74px; letter-spacing: -.4px; }
.menu-sep { width: 1px; height: 20px; background: #222; }
.tool-btn { display: flex; width: 51px; height: 23px; margin-left: 16px; border: 1px solid #292929; border-radius: 2px; background: linear-gradient(#555, #3c3c3c); }
.tool-btn + .tool-btn { margin-left: 15px; }
.tool-main { width: 33px; display: flex; align-items: center; justify-content: center; border-right: 1px solid #252525; }
.tool-main.dark { background: #090909; }
.tool-drop { flex: 1; display: flex; align-items: center; justify-content: center; }
.tool-drop::after { content: ""; border: 4px solid transparent; border-top-color: #ddd; border-bottom: 0; }
.menu-label.help { margin-left: 24px; width: 50px; }

.workspace { flex: none; height: 681px; padding: 4px; display: flex; gap: 3px; }
.pod { border: 1px solid #000; display: flex; flex-direction: column; overflow: hidden; }
.share { width: 1019px; background: #000; }
.pods { width: 336px; display: flex; flex-direction: column; gap: 5px; }
.pod-head { height: 31px; flex: none; display: flex; align-items: center; padding: 0 13px 0 6px; background: linear-gradient(#e3e3e3, #cbcbcb); border: 1px solid #f3f3f3; border-width: 1px 1px 0; box-shadow: inset 0 -1px #555; }
.pod-head h2 { margin: 0; padding-bottom: 2px; font-size: 13.500px; font-weight: 500; line-height: 20px; letter-spacing: -.1px; color: #333; }
.pod-head .sub { font-size: 10px; color: #222; margin-left: 9px; padding-bottom: 2px; }
.pod-head .sharer { margin-left: 14px; letter-spacing: -.22px; }
.pod-head .wide { letter-spacing: -.42px; }
.view-toggle { margin-right: 9px; }
.expand-ico { color: #333; margin-right: 10px; }
.head-sep { width: 1px; height: 19px; background: #222; margin-right: 24px; }
.menu-ico { color: #444; }
.menu-ico.off, .expand-ico.off { color: #999; }
.head-sep.light { background: #888; }

.screen { margin-top: 2px; height: 636px; background: #415361; display: flex; flex-direction: column; font-family: "Open Sans", sans-serif; color: #1e395b; }
.paint-title { height: 18px; flex: none; display: flex; align-items: center; background: linear-gradient(90deg, #d3e5f7 0, #bfd6ea 16%, #aacbe8 19%, #b1d4f8 22%, #a9cbec 29%, #b4d8fc 34%, #b3d7fb 56%, #9bbad8 58.500%, #b0d0f1 61%, #9dbbd9 63%, #b8daf9 66%, #bedcfa 100%); border-bottom: 1px solid #6f88a6; font-size: 9.500px; letter-spacing: -.14px; color: #111; }
.tsep { width: 1px; height: 10px; background: #789; margin: 0 4px 0 1px; }
.paint-tabs { height: 19px; flex: none; display: flex; align-items: flex-end; padding-right: 3px; background: #dfe8f5; border-bottom: 1px solid #bdcbdd; font-size: 9.500px; line-height: 17px; letter-spacing: -.2px; }
.paint-tabs > svg { margin-bottom: 4px; }
.file-tab { width: 44px; height: 17px; background: linear-gradient(#3f76be, #164b9b 50%, #2865b4); display: flex; align-items: center; justify-content: center; }
.tab { width: 44px; text-align: center; }
.tab.active { width: 43px; margin: 0 0 -1px 2px; height: 19px; background: #f8fbff; border: 1px solid #bdcbdd; border-bottom: 0; }
.q { font: bold 9px "Open Sans", sans-serif; fill: #fff; }
.ribbon { height: 72px; flex: none; display: flex; padding: 3px 0 6px; background: linear-gradient(#f6f9fd, #e4edf8 35%, #d9e4f2 70%, #dfe9f5); font-size: 9.500px; line-height: 11px; letter-spacing: -.2px; }
.group { display: flex; flex-direction: column; border-right: 1px solid #bac7d8; flex: none; }
.gbody { height: 58px; flex: none; display: flex; }
.group label { text-align: center; color: #7b8aa2; font-size: 9px; line-height: 10px; margin-top: -1px; height: 6px; letter-spacing: -.1px; }
.g-clip { width: 84px; } .g-img { width: 97px; } .g-tools { width: 64px; } .g-brush { width: 45px; } .g-shapes { width: 196px; } .g-size { width: 42px; } .g-colors { width: 283px; }
.big { display: flex; flex-direction: column; align-items: center; text-align: center; }
.big > svg { margin: 2px 0 3px; }
.dd { border: 2.500px solid transparent; border-top: 3px solid #4d5e75; border-bottom: 0; margin-top: 3px; }
.dd.inline { margin: 0 0 0 4px; }
.dim { color: #929dae; }
.dim .dd { border-top-color: #929dae; }
.stack { display: flex; flex-direction: column; }
.stack div { display: flex; align-items: center; height: 17.500px; }
.stack svg { margin-right: 3px; }
.g-clip .gbody { padding-left: 9px; }
.g-clip .big { width: 24px; }
.g-clip .stack { margin-left: 8px; }
.g-img .gbody { padding-left: 8px; }
.g-img .big { width: 25px; }
.g-img .stack { margin-left: 8px; }
.g-tools .gbody { padding: 6px 0 0 4px; }
.g-brush .gbody, .g-size .gbody { justify-content: center; }
.g-brush .big > svg { margin-bottom: 2px; }
.g-shapes .gbody { padding-left: 5px; }
.g-shapes .gbody > svg { margin-top: 2px; }
.g-shapes .stack { margin-left: 4px; }
.g-colors .gbody { padding-left: 3px; }
.g-colors .big { line-height: 10.500px; }
.color1 { width: 34px; height: 53px; border: 1px solid #c89632; border-radius: 2px; background: linear-gradient(#fbd07c, #f9b747 45%, #ffe08a); }
.color1 > svg { margin-bottom: 2px; }
.color2 { width: 30px; margin-left: 1px; }
.g-colors .color2 > svg, .g-colors .edit > svg { margin: 3px 0 2px; }
.swatches { display: grid; grid-template-columns: repeat(10, 15.500px); grid-auto-rows: 16px; gap: 1.500px 2px; margin: 1px 0 0 3px; height: 52px; }
.swatches i { border: 1px solid #a7b1c0; padding: 1px; background: #dfe8f3 content-box; }
.swatches .c-black { background-color: #000; }
.swatches .c-gray { background-color: #7f7f7f; }
.swatches .c-maroon { background-color: #880015; }
.swatches .c-red { background-color: #ed1c24; }
.swatches .c-orange { background-color: #ff7f27; }
.swatches .c-yellow { background-color: #fff200; }
.swatches .c-green { background-color: #22b14c; }
.swatches .c-sky { background-color: #00a2e8; }
.swatches .c-indigo { background-color: #3f48cc; }
.swatches .c-purple { background-color: #a349a4; }
.swatches .c-white { background-color: #fff; }
.swatches .c-silver { background-color: #c3c3c3; }
.swatches .c-brown { background-color: #b97a57; }
.swatches .c-pink { background-color: #ffaec9; }
.swatches .c-gold { background-color: #ffc90e; }
.swatches .c-cream { background-color: #efe4b0; }
.swatches .c-lime { background-color: #b5e61d; }
.swatches .c-aqua { background-color: #99d9ea; }
.swatches .c-steel { background-color: #7092be; }
.swatches .c-lilac { background-color: #c8bfe7; }
.edit { width: 30px; margin-left: 2px; }
.tool-a { font: bold 13px "Liberation Serif", serif; fill: #1e395b; }
.thick { fill: none; stroke: #000; stroke-width: 2.200; }
.thin { fill: none; stroke: #222; stroke-width: 1; }
.note { font: bold 11.500px Lato, sans-serif; fill: #161616; }

.video { height: 209px; }
.video-body { flex: 1; background: linear-gradient(135deg, transparent 42%, #a6a6a6 48% 52%, transparent 58%) 0 0 / 5px 5px, linear-gradient(#929292, #868686); }
.attendees { height: 273px; background: #e1e1e1; }
.att-tools { height: 31px; flex: none; padding: 3px 8px; border-bottom: 1px solid #777; }
.speakers { height: 22px; flex: none; display: flex; align-items: center; gap: 8px; padding-left: 8px; font-size: 10.500px; font-style: italic; color: #666; border-bottom: 1px solid #666; letter-spacing: .12px; }
.att-scroll { flex: 1; min-height: 0; display: flex; }
.att-list { flex: 1; background: #fff; overflow: hidden; }
.role { height: 22px; display: flex; align-items: center; padding-left: 6px; background: linear-gradient(#fdfdfd, #dedede); border-bottom: 1px solid #666; font-size: 11px; font-weight: 500; letter-spacing: .08px; color: #222; }
.role.empty { color: #888; }
.tri { border: 4px solid transparent; border-top: 5px solid #444; border-bottom: 0; width: 8px; margin-right: 8px; }
.tri.right { border: 4px solid transparent; border-left: 5px solid #999; border-right: 0; width: 5px; margin: 0 10px 0 1px; }
.person { height: 22px; display: flex; align-items: center; padding: 1px 0 0 11px; gap: 11px; border-bottom: 1px solid #d8d8d8; font-size: 10px; font-weight: 600; color: #000; }
.person.alt { background: #f6f6f6; }
.person.host { border-color: #666; padding-left: 10px; gap: 10px; letter-spacing: -.15px; }
.track { width: 15px; background: #c8c8c8; border-left: 1px solid #777; display: flex; flex-direction: column; }
.track.end { justify-content: flex-end; }
.knob { height: 44px; background: linear-gradient(90deg, #fff, #e8e8e8); border-bottom: 1px solid #666; display: flex; align-items: center; justify-content: center; }
.knob.small { height: 9px; border-top: 1px solid #666; border-bottom: 0; }

.chat { height: 181px; background: #e2e2e2; }
.chat-body { height: 94px; flex: none; display: flex; background: #efefef; border-bottom: 1px solid #777; }
.messages { flex: 1; padding: 10px 0 0 7px; font-size: 11px; line-height: 23px; color: #111; }
.messages p { margin: 0; white-space: nowrap; display: flex; gap: 4px; }
.messages b { font-weight: 600; width: 73px; letter-spacing: .45px; }
.messages span { letter-spacing: -.07px; }
.chat-input { height: 32px; flex: none; display: flex; align-items: center; gap: 3px; padding: 0 7px; border-bottom: 1px solid #777; }
.field { width: 286px; height: 24px; background: #fff; border: 2px solid #10c710; border-radius: 2px; box-shadow: inset 0 0 2px #7e7, 0 0 0 1px #8aa88a; padding: 2px 1px; }
.caret { display: block; width: 1px; height: 15px; background: #000; }
.send { width: 30px; height: 23px; border: 1px solid #777; border-radius: 3px; background: linear-gradient(#fff, #ddd); display: flex; align-items: center; justify-content: center; }
.chat-tabs { flex: 1; background: linear-gradient(135deg, transparent 42%, #ececec 47% 53%, transparent 58%) 0 0 / 6px 6px, #d0d0d0; }
.chat-tabs span { display: block; width: 63px; height: 100%; padding-left: 6px; background: #f4f4f4; border-right: 1px solid #222; font-size: 11px; font-weight: 500; line-height: 22px; color: #111; letter-spacing: -.2px; }

.taskbar { flex: none; height: 39px; display: flex; justify-content: space-between; background: linear-gradient(90deg, #a97069, #a26965 40%, #a36b67 75%, #99625f); border-top: 1px solid #7d4f4d; }
.apps { display: flex; gap: 3px; padding-left: 16px; }
.task { width: 43px; height: 39px; }
.task.open { background: linear-gradient(transparent 28px, #7d514e 28px 29px, #c9a4a1 29px 30px, transparent 30px), #b48784; box-shadow: inset 0 0 0 1px #845855, inset 0 0 0 2px #c9a4a1; }
.task.current { background: linear-gradient(transparent 28px, #7d514e 28px 29px, #fff 29px 30px, transparent 30px), #c9aaa8; box-shadow: inset 0 0 0 1px #7a4c4a, inset 0 0 0 2px #fff; }
.tray { display: flex; padding: 4px 32px 0 0; color: #fff; }
.tray time { width: 44px; margin-left: 24px; font: 12px/22px "Open Sans", sans-serif; letter-spacing: -.4px; white-space: nowrap; }
```
